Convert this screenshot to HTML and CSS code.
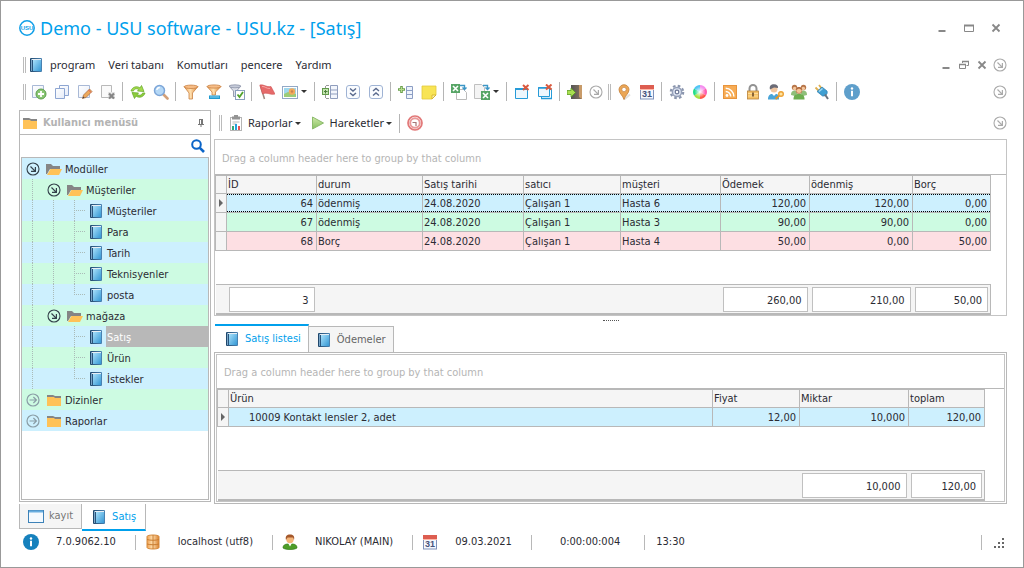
FILE: index.html
```html
<!DOCTYPE html>
<html lang="tr">
<head>
<meta charset="utf-8">
<title>Demo - USU software - USU.kz - [Satış]</title>
<link rel="stylesheet" href="styles.css">
</head>
<body>
<svg class="defs" width="0" height="0" aria-hidden="true">
  <defs>
    <linearGradient id="g-blue" x1="0" y1="0" x2="1" y2="1"><stop offset="0" stop-color="#a8e0fa"/><stop offset="1" stop-color="#3497d4"/></linearGradient>
    <linearGradient id="g-cover" x1="0" y1="0" x2="1" y2="0"><stop offset="0" stop-color="#1d4468"/><stop offset=".25" stop-color="#2c5880"/><stop offset="1" stop-color="#4a84b4"/></linearGradient>
    <linearGradient id="g-orange" x1="0" y1="0" x2="1" y2="0"><stop offset="0" stop-color="#f0a050"/><stop offset=".45" stop-color="#ffe0b0"/><stop offset="1" stop-color="#d9802e"/></linearGradient>
    <linearGradient id="g-green" x1="0" y1="0" x2="0" y2="1"><stop offset="0" stop-color="#cfe9a8"/><stop offset="1" stop-color="#86c060"/></linearGradient>
    <linearGradient id="g-paper" x1="0" y1="0" x2="1" y2="1"><stop offset="0" stop-color="#fff"/><stop offset="1" stop-color="#e6ecf8"/></linearGradient>
    <linearGradient id="g-door" x1="0" y1="0" x2="1" y2="0"><stop offset="0" stop-color="#555"/><stop offset="1" stop-color="#8a7560"/></linearGradient>
    <radialGradient id="g-white"><stop offset="0" stop-color="#fff"/><stop offset="1" stop-color="#fff" stop-opacity="0"/></radialGradient>
    <symbol id="book" viewBox="0 0 16 16"><rect x="2" y="1" width="12" height="14" rx="1" fill="url(#g-cover)"/><rect x="3" y="2" width="1" height="12" fill="#7aa6c8"/><rect x="5" y="3" width="8" height="11" fill="url(#g-blue)"/><path d="M4 2.500h9" stroke="#e8eef4" stroke-width="1"/></symbol>
    <symbol id="arrow-se" viewBox="0 0 16 16"><circle cx="8" cy="8" r="6" fill="none" stroke="currentColor" stroke-width="1.100"/><path d="M5.500 5.500l4.600 4.600M10.400 6v4.400H6" fill="none" stroke="currentColor" stroke-width="1.200"/></symbol>
    <symbol id="arrow-e" viewBox="0 0 16 16"><circle cx="8" cy="8" r="6" fill="none" stroke="currentColor" stroke-width="1.200"/><path d="M4.500 8h6.500M8.400 5l3 3-3 3" fill="none" stroke="currentColor" stroke-width="1.200"/></symbol>
    <symbol id="folder" viewBox="0 0 16 16"><path d="M1 3h6l2 1h6v3H1z" fill="#858585"/><path d="M1 5h7l1 1h6v8H1z" fill="#ffc257"/></symbol>
    <symbol id="folder-open" viewBox="0 0 16 16"><path d="M0 3h5l2 2h7v3H4l-3 5H0z" fill="#858585"/><path d="M4.500 8H16l-3 6H1z" fill="#ffc257"/></symbol>
    <symbol id="doc-add" viewBox="0 0 16 16"><path d="M1.500 1.500h11v12h-11z" fill="url(#g-paper)" stroke="#a9b9d6"/><circle cx="10" cy="10" r="5" fill="#8ac674" stroke="#5c9e4c"/><path d="M10 7v6M7 10h6" stroke="#fff" stroke-width="1.800"/></symbol>
    <symbol id="copy" viewBox="0 0 16 16"><path d="M5.500 1.500h9v10h-9z" fill="url(#g-paper)" stroke="#8ea6d2"/><path d="M1.500 4.500h9v10h-9z" fill="url(#g-paper)" stroke="#8ea6d2"/></symbol>
    <symbol id="edit" viewBox="0 0 16 16"><path d="M1.500 1.500h11v12h-11z" fill="url(#g-paper)" stroke="#a9b9d6"/><path d="M5.500 14.500l1-3.500 6-6 2.500 2.500-6 6z" fill="#eda85b" stroke="#a8683c" stroke-width=".7"/><path d="M5.500 14.500l.7-2 1.500 1.300z" fill="#444"/><path d="M11.500 6l2.500 2.500" stroke="#d95c5c"/></symbol>
    <symbol id="doc-del" viewBox="0 0 16 16"><path d="M1.500 1.500h10v12h-10z" fill="#fafafa" stroke="#b9b9b9"/><rect x="8" y="8" width="7" height="7" fill="#e6e6e6"/><path d="M9 9.500l5 5M14 9.500l-5 5" stroke="#868686" stroke-width="2.200"/></symbol>
    <symbol id="refresh" viewBox="0 0 16 16"><path d="M1 7c1-4 6-5.500 9-3l1.500-2.500L14 7.500 7.500 7l1.300-1.500C6.500 4 4 5 3.500 7z" fill="#a5da4c" stroke="#6cad30" stroke-width=".8"/><path d="M15 9c-1 4-6 5.500-9 3l-1.500 2.500L2 8.500l6.500.5-1.300 1.500c2.300 1.500 4.800.5 5.300-1.500z" fill="#8ccc3c" stroke="#6cad30" stroke-width=".8"/></symbol>
    <symbol id="zoom" viewBox="0 0 16 16"><path d="M10 10l4.500 4.500" stroke="#d3a078" stroke-width="2.600" stroke-linecap="round"/><circle cx="6.500" cy="6.500" r="5" fill="#b5d8f6" stroke="#7da6d8" stroke-width="1.500"/><path d="M3.800 6a3 3 0 0 1 3-2.500" stroke="#fff" stroke-width="1.300" fill="none"/></symbol>
    <symbol id="funnel" viewBox="0 0 16 16"><path d="M1 2.500L6 9v6h3.500V9L15 2.500z" fill="url(#g-orange)" stroke="#c98346" stroke-width=".8"/><ellipse cx="8" cy="2.800" rx="6.800" ry="1.700" fill="#f7bd86" stroke="#c98346" stroke-width=".8"/></symbol>
    <symbol id="funnel-line" viewBox="0 0 16 16"><path d="M1 2.500L6 8v3h3.500V8L15 2.500z" fill="url(#g-orange)" stroke="#c98346" stroke-width=".8"/><ellipse cx="8" cy="2.500" rx="6.800" ry="1.600" fill="#f7bd86" stroke="#c98346" stroke-width=".8"/><rect x="3" y="11.500" width="11" height="3.500" fill="#1f9ad0"/><path d="M4 13h9" stroke="#8ed4f2"/></symbol>
    <symbol id="funnel-check" viewBox="0 0 16 16"><path d="M0 2l4.500 5v5.500h3V7L12 2z" fill="#dcdfe8" stroke="#8d94a8" stroke-width=".9"/><ellipse cx="6" cy="2.300" rx="5.600" ry="1.500" fill="#c6cbd9" stroke="#8d94a8" stroke-width=".8"/><rect x="6.500" y="6.500" width="9" height="9" fill="#fff" stroke="#8aa0bd"/><path d="M8.500 10.500l2 2.500 3.500-5" fill="none" stroke="#52a32c" stroke-width="1.800"/></symbol>
    <symbol id="flag" viewBox="0 0 16 16"><path d="M1.500 2l4 13" stroke="#a08a80" stroke-width="1.500"/><path d="M.8 1C5 0 7 3.500 12 2.500l4 7.500C11.500 11.500 8 7.500 3.500 10z" fill="#e66a6a" stroke="#cf5555" stroke-width=".6"/><path d="M3 2.500C6 2 7.500 5 11 4.500" stroke="#f6a5a5" fill="none"/></symbol>
    <symbol id="image" viewBox="0 0 16 16"><rect x=".5" y="2.500" width="15" height="12" fill="#fff" stroke="#93a9c6"/><rect x="2" y="4" width="12" height="9" fill="#9fd8ee"/><path d="M2 10l4-2 8 2v3H2z" fill="#9ccc78"/><circle cx="10" cy="7.500" r="3.200" fill="#f3aa5c"/><circle cx="10" cy="7.500" r="1.200" fill="#c98352"/></symbol>
    <symbol id="group-expand" viewBox="0 0 16 16"><path d="M8.500 1.500h7v13h-7zM8.500 6h7M8.500 10h7" fill="#f3f6fc" stroke="#8f9dbd"/><path d="M4 1.500h3M4 14.500h3M3.500 2v12" stroke="#999"/><rect x=".5" y="4.500" width="6" height="6" fill="#c4e4b0" stroke="#639a4c"/><path d="M3.500 6v3.500M2 7.500h3.500" stroke="#4b7d3a"/></symbol>
    <symbol id="chev-down" viewBox="0 0 16 16"><rect x="1.500" y="1.500" width="13" height="13" rx="2.500" fill="#fafcff" stroke="#9fb3d4"/><path d="M5 4.500l3 2.500 3-2.500M5 9l3 2.500L11 9" fill="none" stroke="#5a6a8e" stroke-width="1.400"/></symbol>
    <symbol id="chev-up" viewBox="0 0 16 16"><rect x="1.500" y="1.500" width="13" height="13" rx="2.500" fill="#fafcff" stroke="#9fb3d4"/><path d="M5 7l3-2.500L11 7M5 11.500L8 9l3 2.500" fill="none" stroke="#5a6a8e" stroke-width="1.400"/></symbol>
    <symbol id="col-add" viewBox="0 0 16 16"><path d="M8.500 2.500h6v12h-6zM8.500 6.500h6M8.500 10.500h6" fill="#eef3fc" stroke="#8c9ec4"/><path d="M3.500 2v7M0 5.500h7" stroke="#6ba04c" stroke-width="2.600"/><path d="M3.500 3v5M1 5.500h5" stroke="#b5dc8c"/></symbol>
    <symbol id="note" viewBox="0 0 16 16"><path d="M1 2h14v9l-4 4H1z" fill="#f8e455" stroke="#e2c93c" stroke-width=".8"/><path d="M15 11h-4v4z" fill="#fff3a8" stroke="#d2ae25" stroke-width=".8"/></symbol>
    <symbol id="xls-out" viewBox="0 0 16 16"><path d="M5.500 5.500h7l3 3v7h-10z" fill="#fff" stroke="#bbb"/><rect x="0" y="0" width="9" height="9" fill="#57a566"/><path d="M2 2l5 5M7 2L2 7" stroke="#fff" stroke-width="1.600"/><path d="M9 1.500h4.500V5M11.500 3.500l2 2 2-2" fill="none" stroke="#3c96c6" stroke-width="1.400"/></symbol>
    <symbol id="xls-in" viewBox="0 0 16 16"><path d="M.5.5h7l3 3v11h-10z" fill="#f4f4f4" stroke="#c0c0c0"/><rect x="7" y="7" width="9" height="9" fill="#57a566"/><path d="M9 9l5 5M14 9l-5 5" stroke="#fff" stroke-width="1.600"/><path d="M9 1.500h4.500V5M11.500 3.500l2 2 2-2" fill="none" stroke="#3c96c6" stroke-width="1.400"/></symbol>
    <symbol id="win-x" viewBox="0 0 16 16"><path d="M1.500 4.500h12v10h-12z" fill="#eef7fd" stroke="#279bd8"/><path d="M1 5h12" stroke="#279bd8" stroke-width="2"/><path d="M9 1l5.500 5M14.500 1L9 6" stroke="#d9593e" stroke-width="2"/></symbol>
    <symbol id="wins-x" viewBox="0 0 16 16"><path d="M4.500 5.500h10v9h-10z" fill="#fff" stroke="#279bd8"/><path d="M1.500 3.500h11v9h-11z" fill="#eef7fd" stroke="#279bd8"/><path d="M1 4h11M4 14.500h11" stroke="#279bd8" stroke-width="1.600"/><path d="M9 .5l5.500 5M14.500.5L9 5.500" stroke="#d9593e" stroke-width="2"/></symbol>
    <symbol id="door" viewBox="0 0 16 16"><rect x="4" y="1" width="11" height="14" fill="url(#g-door)"/><path d="M12 1h3v14l-3-2z" fill="#c89b69"/><path d="M0 6.500h4V4l4.500 4.500L4 13v-2.500H0z" fill="#a9df50" stroke="#5a9a22" stroke-width=".8"/></symbol>
    <symbol id="pin-map" viewBox="0 0 16 16"><path d="M8 15.500l6-5" stroke="#e0e0e0" stroke-width="2"/><path d="M8 15.500C7 11.500 3 9.500 3 5.700a5 5 0 0 1 10 0c0 3.800-4 5.800-5 9.800z" fill="#eba655" stroke="#c4813c" stroke-width=".8"/><circle cx="8" cy="5.500" r="2.200" fill="#fff" stroke="#b9793c" stroke-width=".6"/></symbol>
    <symbol id="calendar" viewBox="0 0 16 16"><rect x="1.500" y="1.500" width="13" height="13.500" fill="#f4f7fd" stroke="#7f91ba"/><rect x="1" y="1" width="14" height="4" fill="#dd5d50"/><path d="M1 5.500h14" stroke="#ffb8a8"/><text x="8" y="13" text-anchor="middle" class="cal-num">31</text></symbol>
    <symbol id="gear" viewBox="0 0 16 16"><circle cx="8" cy="8" r="6.200" fill="none" stroke="#8a95ad" stroke-width="2.200" stroke-dasharray="2.600 2.270"/><circle cx="8" cy="8" r="4.600" fill="#dce3f0" stroke="#949fb8" stroke-width="1.500"/><circle cx="8" cy="8" r="1.800" fill="#fff" stroke="#6d7896" stroke-width="1.200"/></symbol>
    <symbol id="wheel" viewBox="0 0 16 16"><path d="M8 8V1a7 7 0 0 1 6 3.500z" fill="#f590ee"/><path d="M8 8l6-3.500a7 7 0 0 1 0 7z" fill="#ff5fb0"/><path d="M8 8l6 3.500A7 7 0 0 1 8 15z" fill="#ff5a4a"/><path d="M8 8v7a7 7 0 0 1-6-3.500z" fill="#a8e040"/><path d="M8 8l-6 3.500a7 7 0 0 1 0-7z" fill="#22dd88"/><path d="M8 8L2 4.500A7 7 0 0 1 8 1z" fill="#52c5f5"/><circle cx="8" cy="8" r="5.500" fill="url(#g-white)"/></symbol>
    <symbol id="rss" viewBox="0 0 16 16"><rect x="1.500" y="1.500" width="13" height="13" fill="#f7ac55" stroke="#e8943c"/><circle cx="5" cy="11.500" r="1.400" fill="#fff"/><path d="M3.700 7.500a5 5 0 0 1 5 5M3.700 4.300a8.200 8.200 0 0 1 8.200 8.200" fill="none" stroke="#fff" stroke-width="1.500"/></symbol>
    <symbol id="lock" viewBox="0 0 16 16"><path d="M4.500 7V4.500a3.500 3.500 0 0 1 7 0V7" fill="none" stroke="#929292" stroke-width="2"/><rect x="2.500" y="7" width="11" height="8" fill="#f6c063" stroke="#b8823a" stroke-width=".8"/><path d="M3 9.500h10M3 12h10" stroke="#ffe2a6" stroke-width=".8"/><path d="M8 8.500v4" stroke="#75512a" stroke-width="1.700"/></symbol>
    <symbol id="user-key" viewBox="0 0 16 16"><path d="M0 15.500c0-4 2-5.500 4-5.500l2 1.500L8 10c2 0 3 1.500 3 5.500z" fill="#4aa5d8"/><path d="M4.500 9.500L6 12l1.500-2.500z" fill="#fff"/><circle cx="6" cy="5" r="3.500" fill="#f0c6a0"/><path d="M2 5.500C1 2 3 .2 6 .2S10.500 2 10 4L6 3.500z" fill="#6b6b76"/><path d="M12 11l-4.500 4" stroke="#e29526" stroke-width="2"/><circle cx="13" cy="10" r="2.300" fill="#ffe3a0" stroke="#eda235" stroke-width="1.400"/></symbol>
    <symbol id="users" viewBox="0 0 16 16"><circle cx="3.500" cy="3.500" r="2.700" fill="#b8764a"/><circle cx="12.500" cy="3.500" r="2.700" fill="#b8764a"/><circle cx="3.700" cy="4.500" r="1.800" fill="#f3c69c"/><circle cx="12.300" cy="4.500" r="1.800" fill="#f3c69c"/><path d="M0 11c0-3 1-4.500 4-4.500L7 9l-3 3zM16 11c0-3-1-4.500-4-4.500L9 9l3 3z" fill="#8fbf7a"/><path d="M2.500 15.500C2.500 11.500 4 10 8 10s5.500 1.500 5.500 5.500z" fill="#6dae50"/><circle cx="8" cy="6.500" r="3" fill="#f6c597" stroke="#b0754a" stroke-width=".8"/><path d="M5 6c0-4 6-4 6 0L8 4.500z" fill="#b0683c"/></symbol>
    <symbol id="plug" viewBox="0 0 16 16"><path d="M1.500 3.500L5 7M5 1l3 4" stroke="#e0b050" stroke-width="1.800"/><path d="M3 7.500l5-4.500 5 4c1 3-1.500 5.500-4.500 5z" fill="#3f9fd2" stroke="#2c7cad" stroke-width=".7"/><path d="M5 7.500l3.500-3" stroke="#a5dbf3" stroke-width="1.500"/><path d="M11 10.500l3 4.500" stroke="#69717d" stroke-width="2"/></symbol>
    <symbol id="info" viewBox="0 0 16 16"><circle cx="8" cy="8" r="8" fill="currentColor"/><circle cx="8" cy="4.500" r="1.200" fill="#fff"/><path d="M8 6.800v5.400" stroke="#fff" stroke-width="2" fill="none"/></symbol>
    <symbol id="report" viewBox="0 0 16 16"><rect x="2.500" y="2.500" width="11" height="13" fill="#fff" stroke="#b5b5b5"/><path d="M6 0h4v1.500h2v3H4v-3h2z" fill="#949494"/><path d="M4.500 7h7M4.500 9h4" stroke="#bbb"/><path d="M5 11v4" stroke="#34a875" stroke-width="2"/><path d="M8 9v6" stroke="#27a1dd" stroke-width="2"/><path d="M11 11v4" stroke="#e65353" stroke-width="2"/></symbol>
    <symbol id="play" viewBox="0 0 16 16"><path d="M2.500 2l11 6-11 6z" fill="url(#g-green)" stroke="#8cbb6c"/></symbol>
    <symbol id="clock" viewBox="0 0 16 16"><circle cx="8" cy="8" r="7" fill="#fff" stroke="#e27878" stroke-width="1.700"/><circle cx="8" cy="8" r="4.800" fill="#fff" stroke="#e99a9a" stroke-width="2"/><path d="M5.500 7.500H9V11" fill="none" stroke="#a67676" stroke-width="1.200"/></symbol>
    <symbol id="search" viewBox="0 0 16 16"><circle cx="6.500" cy="6.500" r="4.300" fill="none" stroke="#0b65c8" stroke-width="2"/><path d="M9.800 9.800l4.200 4.200" stroke="#0b65c8" stroke-width="2.600"/></symbol>
    <symbol id="pushpin" viewBox="0 0 8 8"><path d="M2 .5h4M2.500 1v4M1 5.500h6M4 5.500V8" stroke="#777" fill="none"/><path d="M4 1h2v4H4z" fill="#777"/></symbol>
    <symbol id="form" viewBox="0 0 16 16"><rect x=".5" y="2.500" width="15" height="12" fill="#f4faff" stroke="#3d82b8"/><path d="M1 3.500h14" stroke="#68aee0" stroke-width="2"/></symbol>
    <symbol id="db" viewBox="0 0 16 16"><path d="M2 2.500c0-2 12-2 12 0v11c0 2-12 2-12 0z" fill="url(#g-orange)" stroke="#d58a3c"/><path d="M2 5.500c3 1 9 1 12 0M2 10c3 1 9 1 12 0M8 1v14" fill="none" stroke="#c97c30"/></symbol>
    <symbol id="user" viewBox="0 0 16 16"><path d="M1 14c0-3 2-4 5-4h4c3 0 5 1 5 4-3 2-11 2-14 0z" fill="#4e9d28" stroke="#347b18" stroke-width=".7"/><path d="M6 9h4l-2 3.500z" fill="#fff"/><circle cx="8" cy="5.500" r="3.700" fill="#f3b579"/><path d="M4 6c-1-4 1-5.500 4-5.500S13 2 12 6l-1-2.500H5.500z" fill="#a4572a"/></symbol>
    <symbol id="logo" viewBox="0 0 16 16"><circle cx="8" cy="8" r="7.200" fill="#fff" stroke="#109fe8" stroke-width="1.500"/><text x="8" y="10.300" text-anchor="middle" class="logo-text">USU</text></symbol>
    <symbol id="w-min" viewBox="0 0 10 10"><path d="M1.500 8h7" stroke="#888" stroke-width="2"/></symbol>
    <symbol id="w-max" viewBox="0 0 10 10"><path d="M.5 2.500h9v6h-9z" fill="none" stroke="#888"/><path d="M0 2.500h10" stroke="#888" stroke-width="2"/></symbol>
    <symbol id="w-restore" viewBox="0 0 10 10"><path d="M3.500 3V1.500h6v4H7.500M.5 4.500h6v4h-6z" fill="none" stroke="#888"/><path d="M3 1.500h7M0 4.500h7" stroke="#888" stroke-width="1.500"/></symbol>
    <symbol id="w-close" viewBox="0 0 10 10"><path d="M1.500 1.500l7 7M8.500 1.500l-7 7" stroke="#888" stroke-width="1.800"/></symbol>
  </defs>
</svg>

<div class="window">
  <header class="titlebar">
    <svg class="icon"><use href="#logo"/></svg>
    <h1 class="title">Demo - USU software - USU.kz - [Satış]</h1>
    <div class="window-buttons">
      <button aria-label="Küçült"><svg class="glyph"><use href="#w-min"/></svg></button>
      <button aria-label="Büyüt"><svg class="glyph"><use href="#w-max"/></svg></button>
      <button aria-label="Kapat"><svg class="glyph"><use href="#w-close"/></svg></button>
    </div>
  </header>

  <nav class="menubar">
    <span class="handle"></span>
    <svg class="icon"><use href="#book"/></svg>
    <button>program</button>
    <button>Veri tabanı</button>
    <button>Komutları</button>
    <button>pencere</button>
    <button>Yardım</button>
    <div class="child-buttons">
      <button aria-label="Küçült"><svg class="glyph"><use href="#w-min"/></svg></button>
      <button aria-label="Geri yükle"><svg class="glyph"><use href="#w-restore"/></svg></button>
      <button aria-label="Kapat"><svg class="glyph"><use href="#w-close"/></svg></button>
    </div>
    <button class="more push" aria-label="Menü seçenekleri"><svg class="icon"><use href="#arrow-se"/></svg></button>
  </nav>

  <div class="toolbar" role="toolbar" aria-label="Komutlar">
    <span class="handle"></span>
    <button class="tool" aria-label="Ekle"><svg class="icon"><use href="#doc-add"/></svg></button>
    <button class="tool" aria-label="Kopyala"><svg class="icon"><use href="#copy"/></svg></button>
    <button class="tool" aria-label="Düzenle"><svg class="icon"><use href="#edit"/></svg></button>
    <button class="tool" aria-label="Sil"><svg class="icon"><use href="#doc-del"/></svg></button>
    <span class="sep"></span>
    <button class="tool" aria-label="Yenile"><svg class="icon"><use href="#refresh"/></svg></button>
    <button class="tool" aria-label="Ara"><svg class="icon"><use href="#zoom"/></svg></button>
    <span class="sep"></span>
    <button class="tool" aria-label="Filtre"><svg class="icon"><use href="#funnel"/></svg></button>
    <button class="tool" aria-label="Filtre satırı"><svg class="icon"><use href="#funnel-line"/></svg></button>
    <button class="tool" aria-label="Filtre seçimi"><svg class="icon"><use href="#funnel-check"/></svg></button>
    <span class="sep"></span>
    <button class="tool" aria-label="Bayrak"><svg class="icon"><use href="#flag"/></svg></button>
    <button class="tool drop" aria-label="Resim"><svg class="icon"><use href="#image"/></svg><span class="caret"></span></button>
    <span class="sep"></span>
    <button class="tool" aria-label="Grupla"><svg class="icon"><use href="#group-expand"/></svg></button>
    <button class="tool" aria-label="Genişlet"><svg class="icon"><use href="#chev-down"/></svg></button>
    <button class="tool" aria-label="Daralt"><svg class="icon"><use href="#chev-up"/></svg></button>
    <span class="sep"></span>
    <button class="tool" aria-label="Sütun ekle"><svg class="icon"><use href="#col-add"/></svg></button>
    <button class="tool" aria-label="Not"><svg class="icon"><use href="#note"/></svg></button>
    <span class="sep"></span>
    <button class="tool" aria-label="İçe aktar"><svg class="icon"><use href="#xls-out"/></svg></button>
    <button class="tool drop" aria-label="Dışa aktar"><svg class="icon"><use href="#xls-in"/></svg><span class="caret"></span></button>
    <span class="sep"></span>
    <button class="tool" aria-label="Pencereyi kapat"><svg class="icon"><use href="#win-x"/></svg></button>
    <button class="tool" aria-label="Tüm pencereleri kapat"><svg class="icon"><use href="#wins-x"/></svg></button>
    <span class="sep"></span>
    <button class="tool" aria-label="Çıkış"><svg class="icon"><use href="#door"/></svg></button>
    <button class="more" aria-label="Araç seçenekleri"><svg class="icon"><use href="#arrow-se"/></svg></button>
    <span class="handle"></span>
    <button class="tool" aria-label="Konum"><svg class="icon"><use href="#pin-map"/></svg></button>
    <button class="tool" aria-label="Takvim"><svg class="icon"><use href="#calendar"/></svg></button>
    <span class="sep"></span>
    <button class="tool" aria-label="Ayarlar"><svg class="icon"><use href="#gear"/></svg></button>
    <button class="tool" aria-label="Renkler"><svg class="icon"><use href="#wheel"/></svg></button>
    <span class="sep"></span>
    <button class="tool" aria-label="Haberler"><svg class="icon"><use href="#rss"/></svg></button>
    <button class="tool" aria-label="Kilitle"><svg class="icon"><use href="#lock"/></svg></button>
    <button class="tool" aria-label="Erişim"><svg class="icon"><use href="#user-key"/></svg></button>
    <button class="tool" aria-label="Kullanıcılar"><svg class="icon"><use href="#users"/></svg></button>
    <button class="tool" aria-label="Bağlantı"><svg class="icon"><use href="#plug"/></svg></button>
    <span class="sep"></span>
    <button class="tool info-soft" aria-label="Bilgi"><svg class="icon"><use href="#info"/></svg></button>
    <button class="more push" aria-label="Araç seçenekleri"><svg class="icon"><use href="#arrow-se"/></svg></button>
  </div>

  <div class="main">
    <aside class="sidebar">
      <div class="sidebar-head">
        <svg class="icon"><use href="#folder"/></svg>
        <h2>Kullanıcı menüsü</h2>
        <button aria-label="Sabitle"><svg class="pin"><use href="#pushpin"/></svg></button>
      </div>
      <div class="sidebar-search">
        <input type="text" aria-label="Menüde ara">
        <button aria-label="Ara"><svg class="icon"><use href="#search"/></svg></button>
      </div>
      <ul class="tree">
        <li><button class="cell expander" aria-label="Daralt"><svg class="icon"><use href="#arrow-se"/></svg></button><span class="cell"><svg class="icon"><use href="#folder-open"/></svg></span><a href="#moduller">Modüller</a></li>
        <li><span class="cell line"></span><button class="cell expander" aria-label="Daralt"><svg class="icon"><use href="#arrow-se"/></svg></button><span class="cell"><svg class="icon"><use href="#folder-open"/></svg></span><a href="#musteriler-grup">Müşteriler</a></li>
        <li><span class="cell line"></span><span class="cell line"></span><span class="cell branch"></span><span class="cell"><svg class="icon"><use href="#book"/></svg></span><a href="#musteriler">Müşteriler</a></li>
        <li><span class="cell line"></span><span class="cell line"></span><span class="cell branch"></span><span class="cell"><svg class="icon"><use href="#book"/></svg></span><a href="#para">Para</a></li>
        <li><span class="cell line"></span><span class="cell line"></span><span class="cell branch"></span><span class="cell"><svg class="icon"><use href="#book"/></svg></span><a href="#tarih">Tarih</a></li>
        <li><span class="cell line"></span><span class="cell line"></span><span class="cell branch"></span><span class="cell"><svg class="icon"><use href="#book"/></svg></span><a href="#teknisyenler">Teknisyenler</a></li>
        <li><span class="cell line"></span><span class="cell line"></span><span class="cell branch end"></span><span class="cell"><svg class="icon"><use href="#book"/></svg></span><a href="#posta">posta</a></li>
        <li><span class="cell line"></span><button class="cell expander" aria-label="Daralt"><svg class="icon"><use href="#arrow-se"/></svg></button><span class="cell"><svg class="icon"><use href="#folder-open"/></svg></span><a href="#magaza">mağaza</a></li>
        <li><span class="cell line"></span><span class="cell"></span><span class="cell branch"></span><span class="cell"><svg class="icon"><use href="#book"/></svg></span><a class="selected" href="#satis">Satış</a></li>
        <li><span class="cell line"></span><span class="cell"></span><span class="cell branch"></span><span class="cell"><svg class="icon"><use href="#book"/></svg></span><a href="#urun">Ürün</a></li>
        <li><span class="cell line"></span><span class="cell"></span><span class="cell branch end"></span><span class="cell"><svg class="icon"><use href="#book"/></svg></span><a href="#istekler">İstekler</a></li>
        <li><button class="cell expander closed" aria-label="Genişlet"><svg class="icon"><use href="#arrow-e"/></svg></button><span class="cell"><svg class="icon"><use href="#folder"/></svg></span><a href="#dizinler">Dizinler</a></li>
        <li><button class="cell expander closed" aria-label="Genişlet"><svg class="icon"><use href="#arrow-e"/></svg></button><span class="cell"><svg class="icon"><use href="#folder"/></svg></span><a href="#raporlar">Raporlar</a></li>
      </ul>
    </aside>

    <main class="content">
      <div class="toolbar actions" role="toolbar" aria-label="Satış">
        <span class="handle"></span>
        <button class="action"><svg class="icon"><use href="#report"/></svg>Raporlar<span class="caret"></span></button>
        <button class="action"><svg class="icon"><use href="#play"/></svg>Hareketler<span class="caret"></span></button>
        <span class="sep"></span>
        <button class="tool" aria-label="Zamanlayıcı"><svg class="icon"><use href="#clock"/></svg></button>
        <button class="more push" aria-label="Araç seçenekleri"><svg class="icon"><use href="#arrow-se"/></svg></button>
      </div>

      <section class="grid">
        <div class="group-panel">Drag a column header here to group by that column</div>
        <div class="grid-body">
          <table>
            <colgroup><col class="c-mark"><col class="w90"><col class="w106"><col class="w101"><col class="w97"><col class="w100"><col class="w89"><col class="w103"><col class="w78"></colgroup>
            <thead>
              <tr><th></th><th>İD</th><th>durum</th><th>Satış tarihi</th><th>satıcı</th><th>müşteri</th><th>Ödemek</th><th>ödenmiş</th><th>Borç</th></tr>
            </thead>
            <tbody>
              <tr class="blue current"><td class="mark"><span class="pointer"></span></td><td class="num">64</td><td>ödenmiş</td><td>24.08.2020</td><td>Çalışan 1</td><td>Hasta 6</td><td class="num">120,00</td><td class="num">120,00</td><td class="num">0,00</td></tr>
              <tr class="green"><td class="mark"></td><td class="num">67</td><td>ödenmiş</td><td>24.08.2020</td><td>Çalışan 1</td><td>Hasta 3</td><td class="num">90,00</td><td class="num">90,00</td><td class="num">0,00</td></tr>
              <tr class="pink"><td class="mark"></td><td class="num">68</td><td>Borç</td><td>24.08.2020</td><td>Çalışan 1</td><td>Hasta 4</td><td class="num">50,00</td><td class="num">0,00</td><td class="num">50,00</td></tr>
              <tr class="filler"><td colspan="9"></td></tr>
            </tbody>
            <tfoot>
              <tr><td></td><td><div class="total">3</div></td><td></td><td></td><td></td><td></td><td><div class="total">260,00</div></td><td><div class="total">210,00</div></td><td><div class="total">50,00</div></td></tr>
            </tfoot>
          </table>
        </div>
      </section>

      <div class="splitter"><span></span></div>

      <div class="tabs" role="tablist">
        <button class="tab active" role="tab" aria-selected="true"><svg class="icon"><use href="#book"/></svg>Satış listesi</button>
        <button class="tab" role="tab" aria-selected="false"><svg class="icon"><use href="#book"/></svg>Ödemeler</button>
      </div>
      <div class="tab-page" role="tabpanel">
        <section class="grid detail">
          <div class="group-panel">Drag a column header here to group by that column</div>
          <div class="grid-body">
            <table>
              <colgroup><col class="c-mark"><col class="w484"><col class="w87"><col class="w109"><col class="w76"></colgroup>
              <thead>
                <tr><th></th><th>Ürün</th><th>Fiyat</th><th>Miktar</th><th>toplam</th></tr>
              </thead>
              <tbody>
                <tr class="blue"><td class="mark"><span class="pointer"></span></td><td class="indent">10009 Kontakt lensler 2, adet</td><td class="num">12,00</td><td class="num">10,000</td><td class="num">120,00</td></tr>
                <tr class="filler"><td colspan="5"></td></tr>
              </tbody>
              <tfoot>
                <tr><td></td><td></td><td></td><td><div class="total">10,000</div></td><td><div class="total">120,00</div></td></tr>
              </tfoot>
            </table>
          </div>
        </section>
      </div>
    </main>
  </div>

  <div class="doc-tabs" role="tablist">
    <button class="doc-tab" role="tab" aria-selected="false"><svg class="icon"><use href="#form"/></svg>kayıt</button>
    <button class="doc-tab active" role="tab" aria-selected="true"><svg class="icon"><use href="#book"/></svg>Satış</button>
  </div>

  <footer class="status">
    <span class="status-item info-strong"><svg class="icon"><use href="#info"/></svg>7.0.9062.10</span>
    <span class="status-item"><svg class="icon"><use href="#db"/></svg>localhost (utf8)</span>
    <span class="status-item"><svg class="icon"><use href="#user"/></svg>NIKOLAY (MAIN)</span>
    <span class="status-item"><svg class="icon"><use href="#calendar"/></svg>09.03.2021</span>
    <span class="status-item timer">0:00:00:004</span>
    <span class="status-item clock">13:30</span>
    <svg class="grip" viewBox="0 0 12 12"><path d="M9 1h2M9 5h2M5 5h2M9 9h2M5 9h2M1 9h2" stroke="#666" stroke-width="2"/></svg>
  </footer>
</div>
</body>
</html>
```
FILE: styles.css
```css
* { box-sizing: border-box; }

body {
  margin: 0;
  font: 11px/16px "DejaVu Sans Condensed", "Noto Sans", sans-serif;
  color: #2b2b33;
  background: #fff;
}

button {
  font: inherit;
  color: inherit;
  background: none;
  border: 0;
  padding: 0;
  margin: 0;
}

a { color: inherit; text-decoration: none; }
ul { list-style: none; margin: 0; padding: 0; }

.defs { position: absolute; }
.icon { width: 16px; height: 16px; flex: none; display: block; }
.glyph { width: 10px; height: 10px; display: block; }
.cal-num { font: bold 9px "Liberation Sans", sans-serif; fill: #46527a; }
.logo-text { font: bold 6px "Liberation Sans", sans-serif; fill: #109fe8; }

.window {
  min-height: 100vh;
  display: flex;
  flex-direction: column;
  border: 1px solid #999;
  padding: 0 16px 0 18px;
}

/* Title bar */
.titlebar { display: flex; align-items: center; height: 53px; }
.title {
  flex: 1;
  margin: 0 0 0 5px;
  font: 18px/24px "Noto Sans", sans-serif;
  color: #00a0ec;
}
.window-buttons { display: flex; gap: 17px; padding-right: 6px; }

/* Menu bar */
.menubar { display: flex; align-items: center; height: 22px; font-family: "Noto Sans", sans-serif; }
.menubar > .icon { margin-right: 6px; }
.menubar > button { margin-right: 13px; }
.menubar .child-buttons { display: flex; gap: 8px; margin-left: auto; padding-right: 6px; }
.more {
  width: 16px;
  height: 16px;
  display: flex;
  justify-content: center;
  color: #aaa;
}
.menubar > .more.push { width: 14px; margin-right: 0; }

/* Toolbars */
.toolbar { display: flex; align-items: center; height: 31px; margin-bottom: 2px; flex: none; }
.handle {
  width: 3px;
  height: 16px;
  margin: 0 2px 0 4px;
  border: solid #bbb;
  border-width: 0 1px;
  flex: none;
}
.toolbar > .handle { margin: 0 1px 0 3px; }
.toolbar > .handle:first-child { margin-left: 4px; }
.sep { width: 1px; height: 19px; margin: 0 3px; background: #b5b5b5; flex: none; }
.tool {
  width: 23px;
  height: 22px;
  display: flex;
  align-items: center;
  justify-content: center;
  flex: none;
}
.tool.drop { width: 33px; gap: 3px; padding-right: 1px; }
.toolbar .more { width: 19px; flex: none; }
.toolbar .more.push { width: 14px; margin-left: auto; }
.caret {
  width: 0;
  height: 0;
  border: 3px solid transparent;
  border-top-color: #333;
  border-bottom: 0;
  flex: none;
}
.info-soft { color: #5f9fcb; }
.info-strong > .icon { color: #1681bd; }
.actions { height: 28px; padding-left: 1px; font-family: "Noto Sans", sans-serif; }
.action { display: flex; align-items: center; margin-left: 5px; margin-right: 4px; }
.action .icon { margin-right: 4px; }
.action .caret { margin-left: 2px; }

/* Sidebar */
.main { display: flex; flex: 1; gap: 3px; }
.sidebar {
  width: 192px;
  flex: none;
  display: flex;
  flex-direction: column;
  margin: 1px 0 2px;
  border: 1px solid #b8b8b8;
}
.sidebar-head {
  display: flex;
  align-items: center;
  height: 24px;
  padding: 0 5px 0 2px;
  border-bottom: 1px solid #b8b8b8;
}
.sidebar-head h2 { flex: 1; margin: 0 0 0 5px; font-size: 11px; line-height: 16px; color: #b3b3b3; }
.pin { width: 8px; height: 8px; display: block; }
.sidebar-search { display: flex; align-items: center; height: 22px; padding: 0 4px 0 3px; }
.sidebar-search input { flex: 1; min-width: 0; border: 0; padding: 0; font: inherit; outline: 0; }
.tree { flex: 1; margin: 0 1px 1px; border: 1px solid #b8b8b8; }
.tree li { display: flex; align-items: center; height: 21px; background: #cdfbe2; }
.tree li:nth-child(odd) { background: #cdf0fe; }
.tree a { flex: 1; height: 21px; padding-left: 1px; line-height: 23px; }
.tree a.selected { background: #b8b8b8; color: #fff; }
.cell {
  width: 21px;
  height: 21px;
  flex: none;
  display: flex;
  align-items: center;
  justify-content: center;
}
.expander { color: #33404a; }
.expander.closed { color: #8a9da6; }
.line {
  background: repeating-linear-gradient(#aabbb8 0 1px, transparent 1px 2px) 10px 0 / 1px 100% no-repeat;
}
.branch {
  background:
    repeating-linear-gradient(#aabbb8 0 1px, transparent 1px 2px) 10px 0 / 1px 100% no-repeat,
    repeating-linear-gradient(90deg, #aabbb8 0 1px, transparent 1px 2px) 10px 10px / 11px 1px no-repeat;
}
.branch.end { background-size: 1px 10px, 11px 1px; }

/* Data grids */
.content { flex: 1; min-width: 0; display: flex; flex-direction: column; }
.grid { border: 1px solid #c4c4c4; }
.group-panel {
  height: 35px;
  padding: 0 7px;
  line-height: 37px;
  color: #b5b5b5;
  border-bottom: 1px solid #b8b8b8;
}
.detail .group-panel { height: 34px; line-height: 36px; }
.grid-body { padding-right: 16px; }
.detail .grid-body { padding-right: 21px; }
table { width: 100%; table-layout: fixed; border-collapse: collapse; }
.c-mark { width: 11px; }
.w76 { width: 76px; }
.w78 { width: 78px; }
.w87 { width: 87px; }
.w89 { width: 89px; }
.w90 { width: 90px; }
.w97 { width: 97px; }
.w100 { width: 100px; }
.w101 { width: 101px; }
.w103 { width: 103px; }
.w106 { width: 106px; }
.w109 { width: 109px; }
.w484 { width: 484px; }
th, td {
  height: 19px;
  padding: 2px 3px 0 1px;
  border: 1px solid #b8b8b8;
  font-weight: normal;
  text-align: left;
  white-space: nowrap;
  line-height: 16px;
}
th { height: 18px; padding-top: 1px; background: #f5f5f5; }
.num { text-align: right; }
.indent { padding-left: 20px; }
.mark { background: #f5f5f5; padding: 0 3px; }
.pointer {
  display: block;
  border: 4px solid transparent;
  border-left-color: #666;
  border-right: 0;
  width: 0;
}
.blue td:not(.mark) { background-color: #cdf0fe; }
.green td:not(.mark) { background-color: #cdfbe2; }
.pink td:not(.mark) { background-color: #fddfe3; }
.current td:not(.mark) {
  background-image:
    repeating-linear-gradient(90deg, #000 0 1px, transparent 1px 2px),
    repeating-linear-gradient(90deg, #000 0 1px, transparent 1px 2px);
  background-size: 100% 1px;
  background-position: left top, left bottom;
  background-repeat: no-repeat;
}
.filler td { height: 34px; border-width: 1px 0; }
.detail .filler td { height: 44px; }
tfoot td { height: 28px; padding: 2px 2px 1px; background: #f5f5f5; border-width: 1px 0 2px; }
tfoot td:last-child { border-right-width: 1px; }
.total {
  height: 25px;
  padding-right: 5px;
  border: 1px solid #c0c0c0;
  background: #fff;
  text-align: right;
  line-height: 25px;
}

.splitter { display: flex; justify-content: center; align-items: center; height: 8px; }
.splitter span { width: 16px; border-top: 1px dotted #555; }

/* Tabs over the detail grid */
.tabs { display: flex; align-items: flex-end; padding-left: 1px; }
.tab {
  display: flex;
  align-items: center;
  gap: 5px;
  height: 26px;
  padding: 0 7px;
  border: 1px solid #b8b8b8;
  border-width: 1px 1px 0 0;
  background: #f5f5f5;
  color: #666;
}
.tab.active {
  height: 28px;
  padding: 0 7px 0 9px;
  border-top: 2px solid #00a0ec;
  background: #fff;
  color: #00a0ec;
}
.tab-page { padding: 1px; border: 1px solid #b8b8b8; }

/* Document tabs */
.doc-tabs { display: flex; align-items: flex-start; height: 27px; }
.doc-tab {
  display: flex;
  align-items: center;
  gap: 5px;
  height: 25px;
  padding: 0 8px;
  border: 1px solid #b8b8b8;
  border-top: 0;
  background: #f5f5f5;
  color: #777;
}
.doc-tab.active {
  height: 27px;
  padding: 0 9px;
  border-left: 0;
  border-bottom: 2px solid #00a0ec;
  background: #fff;
  color: #00a0ec;
}

/* Status bar */
.status { display: flex; align-items: center; height: 22px; margin-bottom: 14px; }
.status-item {
  display: flex;
  align-items: center;
  gap: 17px;
  height: 15px;
  padding: 0 19px 0 9px;
  border-right: 1px solid #b8b8b8;
}
.status-item:first-child { padding-left: 4px; }
.status-item.timer { padding: 0 24px 0 28px; }
.status-item.clock { flex: 1; padding-left: 11px; border-right: 1px solid #b8b8b8; }
.grip { width: 12px; height: 12px; margin: 4px 2px 0 11px; }
```
